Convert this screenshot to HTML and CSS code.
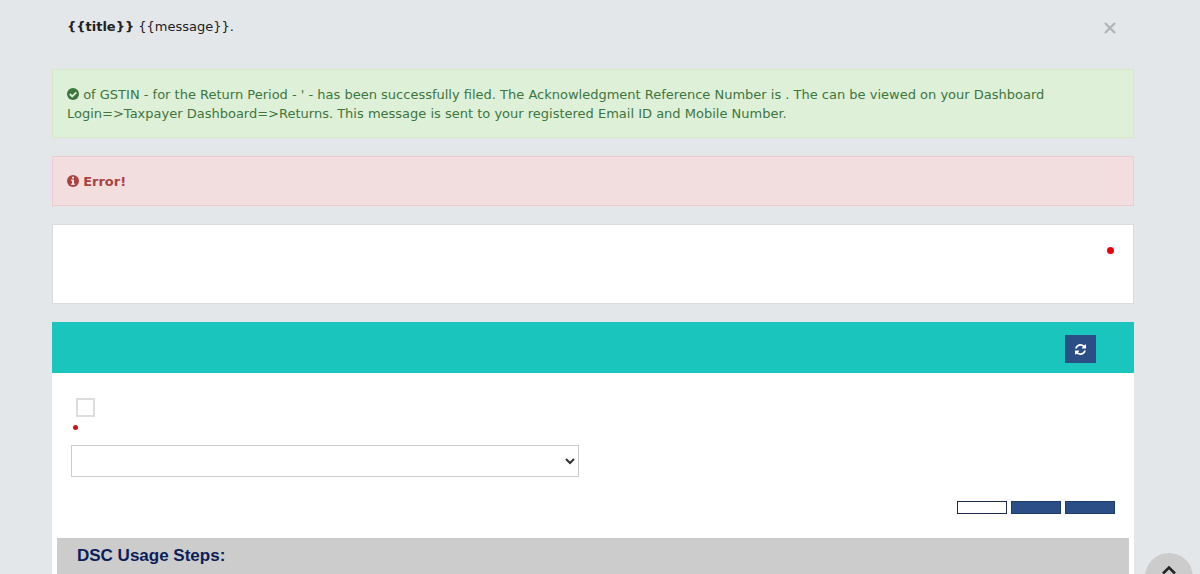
FILE: index.html
```html
<!DOCTYPE html>
<html lang="en">
<head>
    <meta charset="UTF-8">
    <meta name="viewport" content="width=device-width, initial-scale=1.0">
    <title>File Return</title>
    <link rel="stylesheet" href="styles.css">
</head>
<body>
    <div class="container">
        <div class="alert alert-msg">
            <p><strong>{{title}}</strong> {{message}}.</p>
            <button type="button" class="close" aria-label="Close">
                <svg width="12" height="12" viewBox="0 0 12 12"><path d="M1 1l10 10M11 1L1 11" fill="none" stroke="currentColor" stroke-width="2.4"/></svg>
            </button>
        </div>

        <div class="alert alert-success">
            <p><svg class="icon" width="12" height="12" viewBox="0 0 12 12"><circle cx="6" cy="6" r="6" fill="currentColor"/><path d="M2.8 6l2.4 2.4 4.1-4.1" fill="none" stroke="#dff0d8" stroke-width="1.8"/></svg> of GSTIN - for the Return Period - ' - has been successfully filed. The Acknowledgment Reference Number is . The can be viewed on your Dashboard Login=&gt;Taxpayer Dashboard=&gt;Returns. This message is sent to your registered Email ID and Mobile Number.</p>
        </div>

        <div class="alert alert-danger">
            <p><svg class="icon" width="12" height="12" viewBox="0 0 12 12"><circle cx="6" cy="6" r="6" fill="currentColor"/><path d="M5 1.8h2v1.7H5zM4.2 4.5H7v4h.8V10H4.2V8.500H5V6h-.8z" fill="#f2dede"/></svg> <strong>Error!</strong></p>
        </div>

        <div class="card">
            <span class="dot"></span>
        </div>

        <div class="panel">
            <div class="panel-head">
                <button type="button" class="btn-refresh" aria-label="Refresh">
                    <svg width="11" height="11" viewBox="0 0 1536 1536"><path fill="currentColor" d="M1511 928q0 5-1 7-64 268-268 434.500T764 1536q-146 0-282.500-55T238 1324l-129 129q-19 19-45 19t-45-19-19-45V960q0-26 19-45t45-19h448q26 0 45 19t19 45-19 45l-137 137q71 66 161 102t187 36q134 0 250-65t186-179q11-17 53-117 8-23 30-23h192q13 0 22.500 9.500t9.500 22.500zm25-800v448q0 26-19 45t-45 19h-448q-26 0-45-19t-19-45 19-45l138-138Q969 256 768 256q-134 0-250 65T332 500q-11 17-53 117-8 23-30 23H50q-13 0-22.500-9.500T18 608v-7q65-268 270-434.500T768 0q146 0 284 55.500T1297 212l130-129q19-19 45-19t45 19 19 45z"/></svg>
                </button>
            </div>
            <div class="panel-body">
                <input type="checkbox" class="check" id="declare">
                <label class="required" for="declare"><span class="dot dot-small"></span></label>
                <select class="signatory" aria-label="Authorised Signatory">
                    <option></option>
                </select>
                <div class="actions">
                    <button type="button" class="btn btn-default" aria-label="Back"></button>
                    <button type="button" class="btn" aria-label="File with DSC"></button>
                    <button type="button" class="btn" aria-label="File with EVC"></button>
                </div>
            </div>
            <h4 class="steps-title">DSC Usage Steps:</h4>
        </div>
    </div>

    <a href="#" class="to-top" aria-label="Top">
        <svg width="16" height="10" viewBox="0 0 16 10"><path d="M2 8.500l6-6 6 6" fill="none" stroke="currentColor" stroke-width="2.500"/></svg>
    </a>
</body>
</html>
```
FILE: styles.css
```css
* {
    box-sizing: border-box;
}
body {
    margin: 0;
    background: #e4e7ea;
    color: #212121;
    font-family: Verdana, "DejaVu Sans", sans-serif;
    font-size: 13px;
    line-height: 19px;
}
p {
    margin: 0;
}
button {
    padding: 0;
    cursor: pointer;
}
.container {
    display: flex;
    flex-direction: column;
    gap: 18px;
    padding: 1px 66px 0 52px;
}

/* alerts */
.alert {
    padding: 15px 14px 14px;
    border: 1px solid transparent;
}
.alert-msg {
    display: flex;
    justify-content: space-between;
    align-items: flex-end;
}
.alert-success {
    color: #3c763d;
    background: #dff0d8;
    border-color: #d6e9c6;
}
.alert-danger {
    color: #a94442;
    background: #f2dede;
    border-color: #ebccd1;
}
.icon {
    vertical-align: -1px;
}
.close {
    display: flex;
    margin: 0 3px 2px 0;
    border: 0;
    background: none;
    color: #b2b5b8;
}

.card {
    display: flex;
    justify-content: flex-end;
    height: 80px;
    padding: 22px 19px;
    background: #fff;
    border: 1px solid #d9dcdf;
}
.dot {
    width: 7px;
    height: 7px;
    border-radius: 50%;
    background: #e8000b;
}
.dot-small {
    width: 5px;
    height: 5px;
    background: #c8141e;
}

/* signing panel */
.panel {
    background: #fff;
}
.panel-head {
    display: flex;
    justify-content: flex-end;
    padding: 13px 38px 10px;
    background: #19c5bd;
}
.btn-refresh {
    display: flex;
    align-items: center;
    justify-content: center;
    width: 31px;
    height: 28px;
    border: 0;
    background: #2c4e86;
    color: #fff;
}
.panel-body {
    display: flex;
    flex-direction: column;
    align-items: flex-start;
    padding: 25px 19px 24px;
}
.check {
    appearance: none;
    width: 19px;
    height: 19px;
    margin: 0 0 0 5px;
    border: 2px solid #ddd;
    background: #fff;
}
.required {
    display: flex;
    padding: 8px 2px 15px;
}
.signatory {
    width: calc(50% - 14px);
    height: 32px;
    border: 1px solid #ccc;
    border-radius: 0;
    background: #fff;
    color: #333;
}
.actions {
    display: flex;
    gap: 4px;
    align-self: flex-end;
    margin-top: 24px;
}
.btn {
    width: 50px;
    height: 13px;
    border: 1px solid #1f3a68;
    background: #2c4e86;
}
.btn-default {
    border-color: #1d2a4a;
    background: #fff;
}
.steps-title {
    margin: 0 5px;
    padding: 8px 20px;
    background: #ccc;
    color: #0b1e59;
    font-family: Arial, "Liberation Sans", sans-serif;
    font-size: 17px;
    line-height: 20px;
}

.to-top {
    position: fixed;
    right: 7px;
    bottom: -27px;
    display: flex;
    justify-content: center;
    width: 48px;
    height: 48px;
    padding-top: 12px;
    border-radius: 50%;
    background: #ccc;
    color: #222;
}
```
